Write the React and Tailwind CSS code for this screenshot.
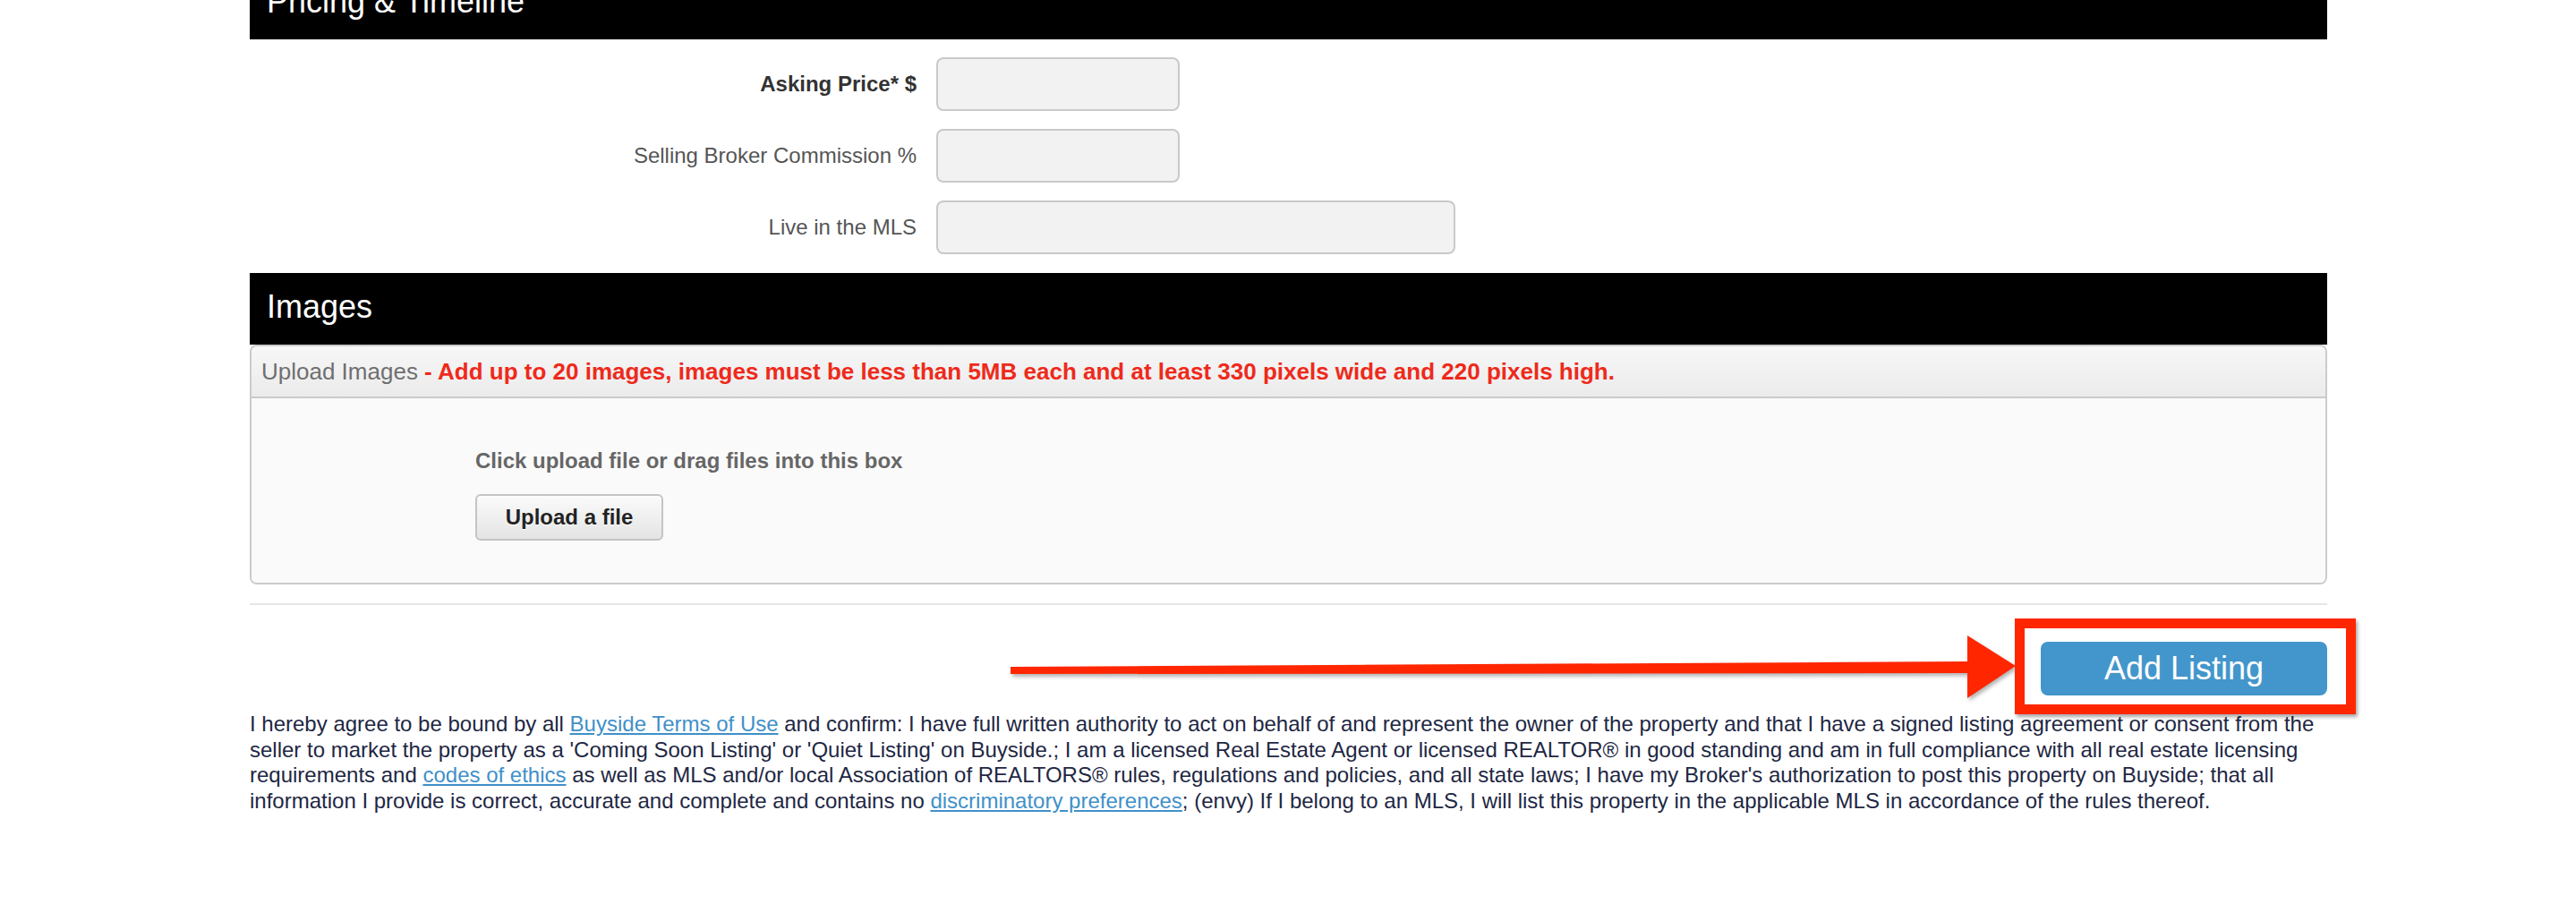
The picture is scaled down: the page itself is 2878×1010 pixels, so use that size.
export default function App() {
  const SectionBar = ({ title }) => (
    <div className="flex h-[80px] items-center bg-black pb-[5px] pl-[19px] text-[36px] text-white">
      {title}
    </div>
  );

  const Row = ({ label, bold, inputW }) => (
    <div className="flex h-[60px] items-center gap-[22px]">
      <div
        className={
          bold
            ? "w-[745px] text-right text-[24px] font-bold text-[#333]"
            : "w-[745px] text-right text-[24px] text-[#555]"
        }
      >
        {label}
      </div>
      <div className={`h-[60px] rounded-[8px] border-2 border-[#c9c9c9] bg-[#f2f2f2] ${inputW}`} />
    </div>
  );

  return (
    <div className="min-h-screen overflow-hidden bg-white font-['Liberation_Sans',Arial,sans-serif]">
      <div className="ml-[279px] -mt-[36px] w-[2321px] pb-[60px]">
        <SectionBar title="Pricing & Timeline" />

        <div className="mt-[20px] flex flex-col gap-[20px]">
          <Row label="Asking Price* $" bold inputW="w-[272px]" />
          <Row label="Selling Broker Commission %" inputW="w-[272px]" />
          <Row label="Live in the MLS" inputW="w-[580px]" />
        </div>

        <div className="mt-[21px]">
          <SectionBar title="Images" />
        </div>

        <div className="overflow-hidden rounded-[8px] border-2 border-[#cbcbcb]">
          <div className="flex h-[58px] items-center border-b-2 border-[#cbcbcb] bg-gradient-to-b from-[#f7f7f7] to-[#ebebeb] pl-[11px] text-[26px]">
            <span className="text-[#6f6f6f]">Upload Images</span>
            <span className="whitespace-pre font-bold text-[#ee2a1b]">
              {" - Add up to 20 images, images must be less than 5MB each and at least 330 pixels wide and 220 pixels high."}
            </span>
          </div>
          <div className="h-[206px] bg-[#fafafa] pl-[250px] pt-[52px]">
            <div className="text-[24px] font-bold text-[#666]">Click upload file or drag files into this box</div>
            <button className="mt-[19px] flex h-[52px] w-[210px] items-center justify-center rounded-[6px] border-2 border-[#c4c4c4] bg-gradient-to-b from-[#fbfbfb] to-[#e4e4e4] text-[24px] font-bold text-[#222] [text-shadow:0_1px_0_#fff]">
              Upload a file
            </button>
          </div>
        </div>

        <div className="mt-[21px] h-[2px] bg-[#e6e6e6]" />

        <div className="relative mt-[41px] flex h-[60px] justify-end">
          <svg
            className="absolute left-[850px] top-[-10px] drop-shadow-[2px_3px_2px_rgba(0,0,0,0.3)]"
            width="1130"
            height="80"
            viewBox="0 0 1130 80"
          >
            <polygon points="0,38 1072,32 1072,45 0,46" fill="#ff2600" />
            <polygon points="1069,3 1123,37 1069,73" fill="#ff2600" />
          </svg>
          <div className="relative">
            <div className="pointer-events-none absolute -bottom-[21px] -left-[29px] -right-[32px] -top-[26px] border-[11px] border-[#ff2600] shadow-[2px_3px_4px_rgba(0,0,0,0.35)]" />
            <button className="flex h-[60px] w-[320px] items-center justify-center rounded-[8px] bg-[#4396cb] text-[36px] text-white">
              Add Listing
            </button>
          </div>
        </div>

        <p className="mt-[18px] whitespace-nowrap text-[24px] leading-[28.7px] text-[#1e2743]">
          I hereby agree to be bound by all{" "}
          <a className="text-[#3f90c9] underline">Buyside Terms of Use</a> and confirm: I have full written
          authority to act on behalf of and represent the owner of the property and that I have a signed listing
          agreement or consent from the
          <br />
          seller to market the property as a 'Coming Soon Listing' or 'Quiet Listing' on Buyside.; I am a licensed
          Real Estate Agent or licensed REALTOR® in good standing and am in full compliance with all real estate
          licensing
          <br />
          requirements and <a className="text-[#3f90c9] underline">codes of ethics</a> as well as MLS and/or local
          Association of REALTORS® rules, regulations and policies, and all state laws; I have my Broker's
          authorization to post this property on Buyside; that all
          <br />
          information I provide is correct, accurate and complete and contains no{" "}
          <a className="text-[#3f90c9] underline">discriminatory preferences</a>; (envy) If I belong to an MLS, I
          will list this property in the applicable MLS in accordance of the rules thereof.
        </p>
      </div>
    </div>
  );
}
